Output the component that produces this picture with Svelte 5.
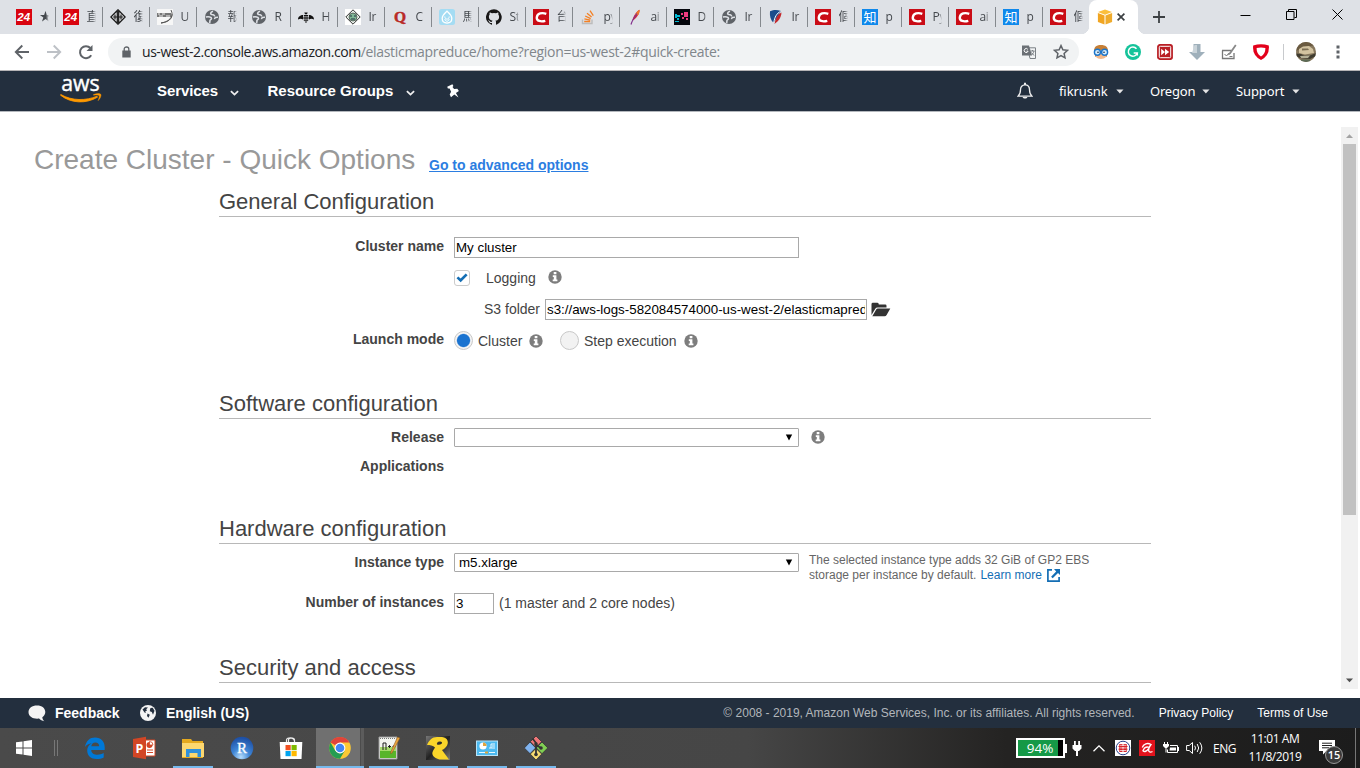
<script>
  const tabs = [
    ['red24', '★'], ['red24', '直'], ['knot', '復'], ['sketch', 'U'], ['globe', '報'], ['globe', 'R'],
    ['bee', 'H'], ['diamond', 'Ir'], ['quora', 'C'], ['ice', '馬'], ['github', 'St'], ['csdn', '台'],
    ['stack', 'py'], ['feather', 'ai'], ['pixels', 'D'], ['globe', 'Ir'], ['shield', 'Ir'], ['csdn', '個'],
    ['zhihu', 'p'], ['csdn', 'Py'], ['csdn', 'ai'], ['zhihu', 'p'], ['csdn', '個']
  ];
  const apps = ['edge', 'ppt', 'folder', 'rstudio', 'store', 'chrome', 'npp', 'putty', 'panel', 'git'];
  const running = ['folder', 'chrome', 'npp', 'putty', 'panel', 'git'];
</script>

{#snippet favicon(kind)}
  <svg class="fav" viewBox="0 0 16 16" width="16" height="16">
    {#if kind === 'red24'}
      <rect width="16" height="16" fill="#d9040f" />
      <text x="7.700" y="12" text-anchor="middle" font-family="Liberation Sans" font-size="11.500" font-weight="700" font-style="italic" fill="#fff">24</text>
    {:else if kind === 'csdn'}
      <rect width="16" height="16" fill="#ca0c16" />
      <path d="M13.3 4.8C9 3.3 4.3 4.2 3.8 8.3 3.4 12.2 8 13 12.3 11.8" fill="none" stroke="#fff" stroke-width="2.4" />
    {:else if kind === 'zhihu'}
      <rect width="16" height="16" fill="#0f88eb" />
      <text x="8" y="12.6" text-anchor="middle" font-family="Noto Sans CJK SC" font-size="13" fill="#fff">知</text>
    {:else if kind === 'globe'}
      <circle cx="8" cy="8" r="7" fill="#5f6368" />
      <path d="M9 2.300C6.300 3.200 6 5 7.800 5.500c1.800.3 3 .7 2.700 2M1.800 8C4.500 7.500 7.600 7.800 7.500 9.500c0 1.300-1.900 1-1.600 2.600.1.900-.1 1.500-.5 2M14 8.300c-2.300-.3-3.600.6-3.400 1.900" fill="none" stroke="#dee1e6" stroke-width="1.600" />
    {:else if kind === 'knot'}
      <path d="M8 .5 15.500 8 8 15.500.5 8z" fill="#fff" fill-opacity=".5" />
      <g fill="none" stroke="#1c1c1c" stroke-width="1.300"><path d="M7.300 1.500.9 8l6.400 6.500zM8.700 1.500 15.100 8l-6.400 6.500z" /><path d="M3 8h10M5 5.500v5M11 5.500v5" stroke-width="1.200" /></g>
    {:else if kind === 'sketch'}
      <rect width="16" height="16" fill="#f7f7f7" />
      <path d="M0 4h14v4H0z" fill="#777" /><path d="M1 5h2M5 5h3M9 7h4M2 7h4" stroke="#eee" />
      <path d="M14 1c3 6 0 12-10 13M15 5c0 5-5 8-11 9" fill="none" stroke="#555" />
    {:else if kind === 'bee'}
      <g fill="#111"><path d="M0 10.500C0 7.500 2.500 6 5 6v4.500C3.500 9.500 2 9.500 0 10.500zM16 10.500C16 7.500 13.500 6 11 6v4.500c1.500-1 3-1 5 0zM6.300 3.500h3.400L9 5.200H7zM5.800 6h4.400v1.400H5.800zM5.400 8.200h5.200v1.500H5.400zM5.800 10.500h4.400v1.300H5.800zM6.600 12.500h2.800L8 13.900z" /></g>
    {:else if kind === 'diamond'}
      <rect width="16" height="16" fill="#fff" /><path d="M8 .8 15.2 8 8 15.2.8 8z" fill="#e8f0e9" stroke="#333" />
      <circle cx="8" cy="8" r="4" fill="#7fb795" stroke="#444" stroke-width=".7" /><path d="M5 7h2M9 7h2M6 10h4" stroke="#234" />
    {:else if kind === 'quora'}
      <text x="8" y="13" text-anchor="middle" font-family="Liberation Serif" font-size="15.500" font-weight="700" fill="#b92b27" stroke="#b92b27" stroke-width=".5">Q</text>
    {:else if kind === 'ice'}
      <rect width="16" height="16" rx="2.5" fill="#a4dcf3" /><path d="M8 2.2c1 1.3 4.8 3.3 4.8 7.4 0 3-2.2 4.5-4.8 4.5s-4.8-1.5-4.8-4.5C3.200 5.500 7 3.500 8 2.200z" fill="none" stroke="#fff" stroke-width="1.300" />
      <path d="M5.800 7.500c.2 3.500 4.200 3.500 4.400 0M5.800 10c.8 3 3.600 3 4.400 0" fill="none" stroke="#fff" />
    {:else if kind === 'github'}
      <path fill="#181717" d="M8 .2a8 8 0 0 0-2.500 15.600c.4.1.5-.2.5-.4v-1.500c-2.200.5-2.700-1-2.700-1-.4-.9-.9-1.200-.9-1.200-.7-.5.100-.5.100-.5.800.1 1.200.8 1.200.8.7 1.200 1.900.9 2.300.7.1-.5.3-.9.5-1.100-1.800-.2-3.600-.9-3.600-4 0-.9.3-1.600.8-2.100-.1-.2-.4-1 .1-2.100 0 0 .7-.2 2.200.8a7.600 7.600 0 0 1 4 0c1.500-1 2.200-.8 2.200-.8.4 1.100.200 1.900.100 2.100.5.600.800 1.300.800 2.200 0 3.100-1.900 3.700-3.700 3.900.3.300.6.800.6 1.500v2.200c0 .2.100.500.500.400A8 8 0 0 0 8 .2z" />
    {:else if kind === 'stack'}
      <path d="M2.500 10.500v4h9.500v-4" fill="none" stroke="#bcbbbb" stroke-width="1.400" />
      <g stroke="#f48024" stroke-width="1.300"><path d="M4.200 12.500h6M4.400 9.900l5.900 1.200M5.200 7l5.500 2.600M7 4.200l4.600 3.800M10 1.600l3.300 5" /></g>
    {:else if kind === 'feather'}
      <path d="M12.500.8C9 2.500 6 8 5.500 11.500c3-1 7.500-6.500 7-10.700z" fill="#d22b3c" /><path d="M12.500.8C11 1.500 9 4 8 6l3.500-.3c1-2 1.200-3.800 1-4.900z" fill="#ef7b28" /><path d="M4 15.500C5 12 7 8.500 10 4.500" stroke="#83308d" fill="none" stroke-width="1.200" />
    {:else if kind === 'pixels'}
      <rect width="16" height="16" fill="#05070d" /><g fill="#00b9d5"><path d="M1 5h2v4H1zM3 6h3v2H3zM3 9h2v2H3zM1 12h4v1H1z" /></g><g fill="#f23b80"><path d="M7 4h2v2H7zM10 3h4v5h-4zM8 8h2v2H8zM12 9h2v2h-2z" /></g>
    {:else if kind === 'shield'}
      <path d="M2 2.200C6 .5 9 .5 13 2L5.500 14C2.500 11 1.500 7 2 2.200z" fill="#1b4d8c" /><path d="M13.500 3.500C10 5 7.500 9 6.500 15c4-3 6.500-6 7-11.500z" fill="#c3272b" /><path d="M12.500 2.500C9 4 6.500 8 5.700 14" fill="none" stroke="#fff" />
    {/if}
  </svg>
{/snippet}

{#snippet info()}
  <svg class="info" viewBox="0 0 14 14" width="14" height="14"><circle cx="7" cy="7" r="6.700" fill="#7d7d7d" /><path d="M5.700 2.100h2.700v2.100H5.700zM4.800 5.200h3.600v4.300h1v1.700H4.700V9.500h1.100V6.900h-1z" fill="#fff" /></svg>
{/snippet}

{#snippet chevron(cls)}
  <svg class={cls} viewBox="0 0 9 6" width="9" height="6"><path d="M.9 1.100 4.500 4.600 8.100 1.100" fill="none" stroke="#eee" stroke-width="1.800" /></svg>
{/snippet}

{#snippet caret()}
  <svg viewBox="0 0 8 5" width="8" height="5"><path d="M.3.500h7.200L3.900 4.500z" fill="#e5e5e5" /></svg>
{/snippet}

{#snippet appicon(kind)}
  <svg viewBox="0 0 24 24" width="24" height="24">
    {#if kind === 'edge'}
      <path fill="#0078d7" d="M2 11C3 4.800 7 1.500 12 1.500c6 0 9.700 4 9.700 9.700V14H8.200c.2 3.600 3.200 4.800 6.300 4.800 2.300 0 4.300-.6 6.200-1.700v4.300c-2 1.100-4.400 1.600-7 1.600-5.800 0-9.500-3.300-9.500-8.500 0-3.300 1.700-5.800 4.600-7.200C5.600 7.800 3.500 9 2 11zm6.300-.7h7.900c0-2.400-1.500-3.800-3.800-3.800-2.400 0-3.700 1.500-4.100 3.800z" />
    {:else if kind === 'ppt'}
      <path d="M13 4h10v16H13z" fill="#fff" stroke="#d24625" /><circle cx="17.500" cy="9" r="3" fill="#d24625" /><path d="M17.500 9V5.500A3.500 3.500 0 0 1 21 9z" fill="#fff" stroke="#d24625" stroke-width=".8" /><path d="M15 14h6M15 16.500h6" stroke="#d24625" /><path d="M1 3 14 .8v22.400L1 21z" fill="#d24625" />
      <text x="7.500" y="16.500" text-anchor="middle" font-family="Open Sans" font-size="12.500" font-weight="700" fill="#fff">P</text>
    {:else if kind === 'folder'}
      <path d="M1 3h9l1.500 2H22v17H1z" fill="#e5a91f" /><path d="M1 7h22v14H1z" fill="#fcd770" /><path d="M5 21v-8h15v8h-3.500v-4h-8v4z" fill="#2f8fdb" />
    {:else if kind === 'rstudio'}
      <defs><radialGradient id="ball" cx=".45" cy=".9" r=".85"><stop offset="0" stop-color="#b5dcfc" /><stop offset=".45" stop-color="#3f86d6" /><stop offset="1" stop-color="#1e50a5" /></radialGradient></defs>
      <circle cx="12" cy="12" r="11.300" fill="url(#ball)" /><text x="12" y="16.800" text-anchor="middle" font-family="Liberation Serif" font-size="15" fill="#fff" stroke="#fff" stroke-width=".3">R</text>
    {:else if kind === 'store'}
      <path d="M7.500 6V4c0-3 8-3 8 0v2M9.500 6V3.500C10.500 1 15 2 15.500 5" fill="none" stroke="#eee" stroke-width="1.200" /><path d="M.7 6h22.600l-.8 17h-21z" fill="#fff" /><path d="M6.500 9h5.200v5.200H6.500z" fill="#f25022" /><path d="M12.500 9h5.200v5.200h-5.200z" fill="#7fba00" /><path d="M6.500 15h5.200v5.200H6.500z" fill="#00a4ef" /><path d="M12.500 15h5.200v5.200h-5.200z" fill="#ffb900" />
    {:else if kind === 'chrome'}
      <circle cx="12" cy="12" r="10.800" fill="#fcc934" /><path d="M12 12 2.600 6.600A10.800 10.800 0 0 1 21.400 6.600H12z" fill="#e0443a" /><path d="M2.600 6.600A10.800 10.800 0 0 0 12 22.800L16.700 14.700 12 17.400 7.300 14.700z" fill="#249d53" /><circle cx="12" cy="12" r="5.400" fill="#fff" /><circle cx="12" cy="12" r="4.300" fill="#4285f4" />
    {:else if kind === 'npp'}
      <path d="M2 1h18v22H2z" fill="#f3f5f0" stroke="#999" /><path d="M3 13h16v9H3z" fill="#58b52a" /><path d="M3 11h16v4H3z" fill="#a5dc6c" /><path d="M3 2.500h16" stroke="#777" stroke-dasharray="1 1" /><path d="M6 14V7h3v7M11 10.500h3M12.500 9v3M15.500 10.500h3M17 9v3" stroke="#222" fill="none" /><path d="M23 2 15 17l-1.500.5.500-2L20.500 1z" fill="#e8a33e" stroke="#81501b" stroke-width=".5" />
    {:else if kind === 'putty'}
      <defs><linearGradient id="dark" x2="1" y2="1"><stop stop-color="#777" /><stop offset=".5" stop-color="#222" /><stop offset="1" stop-color="#777" /></linearGradient></defs>
      <path d="M0 0h24v24H0z" fill="url(#dark)" /><path fill-rule="evenodd" d="M1 9C3 4.500 6 1 11 1h5c6 .5 7.500 6 4 10-1.500 1.700-2.500 2.500-4 3l7 9.500h-9.500C7.500 22 5 18.500 7 15c.7-1.500 1.500-2.500 2-3.500C7 9.500 4 9 1 9zM13.500 5.500c-1.800 0-3 1.500-2.500 3 2.500 1 5.500-.5 5-2-.3-.8-1.200-1-2.500-1z" fill="#f9d52a" />
    {:else if kind === 'panel'}
      <rect x="1.500" y="5" width="21" height="14.500" fill="#4dbaf0" stroke="#b8e4f8" /><circle cx="8" cy="10" r="3.600" fill="#fff" /><path d="M8 10V6.400a3.600 3.600 0 0 1 3.600 3.600z" fill="#e2a33c" /><path d="M14 12h2V8h4M16 12h4M17 10h3" stroke="#e8f8ff" fill="none" /><path d="M4 16.500h6M14 16.500h6" stroke="#e8f8ff" /><path d="M10 16.500h3" stroke="#dda63e" stroke-width="2" />
    {:else}
      <g stroke="#333" stroke-width=".8"><path d="M12 0l5.700 5.700-5.700 5.800-5.700-5.800z" fill="#ee7678" /><path d="M6 6l5.700 5.900L6 17.700.3 12z" fill="#80b3ef" /><path d="M18 6l5.800 5.900L18 17.700l-5.700-5.800z" fill="#80cf54" /><path d="M12 12.400l5.700 5.700L12 24l-5.700-5.900z" fill="#f8dc72" /></g>
      <path d="M8.500 2.500 12 7v12M12 9l5 3" stroke="#333" stroke-width="1.800" fill="none" /><circle cx="12" cy="8" r="1.800" fill="#333" /><circle cx="17" cy="12" r="1.800" fill="#333" /><circle cx="12" cy="18.500" r="1.800" fill="#333" />
    {/if}
  </svg>
{/snippet}

<div class="screen">
  <div class="tabstrip">
    {#each tabs as [kind, label], i}
      <div class="tab" class:last={i === tabs.length - 1}>{@render favicon(kind)}<span>{label}</span></div>
    {/each}
    <div class="tab active">
      <svg viewBox="0 0 16 16" width="16" height="16"><path d="M8 .5 15 3 8 5.800 1 3z" fill="#fbbf3d" /><path d="M.9 4 7.500 6.500v9L.9 13z" fill="#f1a521" /><path d="M15.100 4 8.500 6.500v9L15.100 13z" fill="#efab2c" /></svg>
      <svg viewBox="0 0 8 8" width="8" height="8"><path d="M.6.600l6.800 6.800M7.400.600.600 7.400" stroke="#3c4043" stroke-width="1.700" /></svg>
    </div>
    <svg class="plus" viewBox="0 0 12 12" width="12" height="12"><path d="M6 0v12M0 6h12" stroke="#3c4043" stroke-width="1.800" /></svg>
    <div class="winbtns">
      <svg viewBox="0 0 11 11" width="11" height="11"><path d="M.5 6.500h10" stroke="#000" /></svg>
      <svg viewBox="0 0 11 11" width="11" height="11"><path d="M.5 2.500h7.500v8H.5zM2.500 2V.5h8v8H8.500" fill="none" stroke="#000" /></svg>
      <svg viewBox="0 0 11 11" width="11" height="11"><path d="M.5.500l10 10M10.500.500l-10 10" stroke="#000" /></svg>
    </div>
  </div>

  <div class="toolbar">
    <svg viewBox="0 0 16 16" width="16" height="16"><path d="M15 8H2M8.300 1.500 1.800 8l6.500 6.500" fill="none" stroke="#5f6368" stroke-width="1.900" /></svg>
    <svg viewBox="0 0 16 16" width="16" height="16"><path d="M1 8h13M7.700 1.500 14.200 8l-6.500 6.500" fill="none" stroke="#bdc1c6" stroke-width="1.900" /></svg>
    <svg viewBox="0 0 16 16" width="16" height="16"><path d="M13.200 11.200A6 6 0 1 1 12.400 4" fill="none" stroke="#5f6368" stroke-width="2" /><path d="M14.500 1v6h-6z" fill="#5f6368" /></svg>
    <div class="omnibox">
      <svg class="lock" viewBox="0 0 9 12" width="9" height="12"><path d="M.3 4.500h8.400v7H.3z" fill="#5f6368" /><path d="M2.200 5V3c0-2.700 4.600-2.700 4.600 0v2" fill="none" stroke="#5f6368" stroke-width="1.300" /></svg>
      <span class="url"><b>us-west-2.console.aws.amazon.com</b><i>/elasticmapreduce/home?region=us-west-2#quick-create:</i></span>
      <svg class="translate" viewBox="0 0 14 14" width="14" height="14"><path d="M5.500 2.800h8v10.700H8z" fill="#f1f3f4" stroke="#7b8085" /><path d="M0 .5h7l3 10H0z" fill="#6b7075" /><path d="M5.800 4.300a2 2 0 1 0 .3 1.900H4.500" fill="none" stroke="#fff" /><path d="M8.500 6h4M10.500 5v1M12 6c-.3 2-1.500 3-2.500 4M9.500 7.500l2.500 3" stroke="#7b8085" fill="none" /></svg>
      <svg class="star" viewBox="0 0 16 16" width="16" height="16"><path d="M8 1.600l1.900 4.200 4.600.5-3.400 3.100.9 4.500-4-2.300-4 2.300.9-4.500L1.500 6.300l4.600-.5z" fill="none" stroke="#5f6368" stroke-width="1.500" /></svg>
    </div>
    <div class="exts">
      <svg viewBox="0 0 16 16" width="16" height="16"><path d="M1 7C1 2.500 4 1 8 1c4.500 0 7 2 7 6l-1.500 6h-11z" fill="#c77f35" /><path d="M3 6h10v7c-2 2.500-8 2.500-10 0z" fill="#f2b98b" /><circle cx="4.400" cy="8.300" r="3" fill="#d4ecfb" stroke="#1a75cc" stroke-width="1.400" /><circle cx="11.600" cy="8.300" r="3" fill="#d4ecfb" stroke="#1a75cc" stroke-width="1.400" /><circle cx="5" cy="8.300" r=".8" fill="#124" /><circle cx="11" cy="8.300" r=".8" fill="#124" /></svg>
      <svg viewBox="0 0 16 16" width="16" height="16"><circle cx="8" cy="8" r="8" fill="#15c39a" /><path d="M11.500 4.800A4.600 4.600 0 1 0 12.300 9H8.700M12.300 8.500v3" fill="none" stroke="#fff" stroke-width="1.500" /></svg>
      <svg viewBox="0 0 16 16" width="16" height="16"><rect x=".8" y=".8" width="14.400" height="14.400" rx="2" fill="#b91f25" stroke="#b91f25" stroke-width="1.400" /><rect x="2.300" y="2.300" width="11.400" height="11.400" rx="1" fill="none" stroke="#fff" /><path d="M4.200 4.700 8 8l-3.800 3.300zM8 4.700 12.200 8 8 11.300z" fill="#fff" /></svg>
      <svg viewBox="0 0 16 16" width="16" height="16"><path d="M4.500 0h7v8H16l-8 8-8-8h4.500z" fill="#9fb0bb" /><path d="M5.500 1h2.500v8H3z" fill="#c9d3d9" /></svg>
      <svg viewBox="0 0 16 16" width="16" height="16"><path d="M1 6.500h9.500M13 9v5.500H1.500v-8" fill="none" stroke="#777" stroke-width="1.300" /><path d="M14.800 1 9 9.300l-1.800 1.200" fill="none" stroke="#888" stroke-width="1.800" /><path d="M3.500 10l2 2 2-2.500M8.500 12.500h3" fill="none" stroke="#777" /></svg>
      <svg viewBox="0 0 16 16" width="16" height="16"><path d="M.2 1.500Q8-1 15.800 1.500 17 11.500 8 16-1 11.500.2 1.500z" fill="#e3001b" /><path d="M3.600 4Q8 2.900 12.400 4 12.500 9.800 8 12.400 3.500 9.800 3.600 4z" fill="#fff" /></svg>
    </div>
    <span class="divider"></span>
    <svg class="avatar" viewBox="0 0 20 20" width="20" height="20"><defs><clipPath id="round"><circle cx="10" cy="10" r="10" /></clipPath></defs><g clip-path="url(#round)"><path d="M0 0h20v20H0z" fill="#85765c" /><path d="M0 0h20v3L9 5 0 9z" fill="#6a5a40" /><path d="M3 7 7 4.500l6-.5 4 3 1 4-9 1.500L3 11z" fill="#d3c3a0" /><path d="M6 6.500h6l1 1.500-7 .5z" fill="#7b6e54" /><path d="M0 11.500 5 12l3 1.500h6L20 11v3l-6 3-10-1-4-2z" fill="#3f3b2f" /><path d="M4 14l10-.5-2 2.500H5z" fill="#b3ae95" /><path d="M5 17.500h9v3H5z" fill="#5c6a55" /></g></svg>
    <svg class="dots" viewBox="0 0 4 14" width="4" height="14"><path d="M.5.500h3v3h-3zM.5 5.500h3v3h-3zM.5 10.500h3v3h-3z" fill="#5f6368" /></svg>
  </div>

  <header>
    <svg class="aws" viewBox="0 0 42 26" width="42" height="26">
      <text x="1.200" y="13.200" font-family="Open Sans" font-size="21" textLength="38.500" lengthAdjust="spacingAndGlyphs" fill="#fff" stroke="#fff" stroke-width=".4">aws</text>
      <path d="M.5 17.200C11 25.500 26 26 37.500 19.200l-.5-1C26 22.800 12 23 .8 16.500z" fill="#f90" stroke="#f90" stroke-width=".8" /><path d="M33.500 16.600c3-1.300 6.500-1.300 7.300-.3.700 1.300-.6 4.500-2.700 6.400.8-2.500 1.600-4.400 1-5.200-.8-.8-3-.6-5.600-.3z" fill="#f90" stroke="#f90" stroke-width=".4" />
    </svg>
    <span class="menu services">Services</span>{@render chevron('chev')}
    <span class="menu groups">Resource Groups</span>{@render chevron('chev')}
    <svg class="pin" viewBox="0 0 14 14" width="14" height="14"><path d="M1.200 2.800 6.400.2l1 1.900-.9.800 1.600 2.100 3.200-.2 1.600 2.200-3 1.900 2.600 4.500-4.200-3L5 13.200 3.700 10.500l1.400-2.800L3.600 4.600l-1.700-.1z" fill="#fff" /></svg>
    <div class="account">
      <svg class="bell" viewBox="0 0 16 18" width="16" height="18"><path d="M1 14.200c2-1.700 2.500-3.700 2.500-6.400 0-3 1.700-4.900 4.500-4.900s4.500 1.900 4.500 4.900c0 2.700.5 4.700 2.500 6.400z" fill="none" stroke="#eee" stroke-width="1.300" /><path d="M7 .800h2V3H7zM5.600 14.900h4.800C10 17 6 17 5.600 14.900z" fill="#eee" /></svg>
      <span class="user">fikrusnk</span>{@render caret()}
      <span class="region">Oregon</span>{@render caret()}
      <span class="support">Support</span>{@render caret()}
    </div>
  </header>

  <div class="content">
    <main>
      <div class="title"><h1>Create Cluster - Quick Options</h1><a href="#advanced">Go to advanced options</a></div>
      <section>
        <h2>General Configuration</h2>
        <div class="row name"><label for="cname">Cluster name</label><input id="cname" class="wide" value="My cluster" /></div>
        <div class="row logging"><span class="label"></span><span class="check"><svg viewBox="0 0 12 10" width="12" height="10"><path d="M.5 5.200 2.300 3.400 4.600 5.600 9.700.5 11.600 2.200 4.700 9.300z" fill="#146eb4" /></svg></span><span class="t-log">Logging</span>{@render info()}</div>
        <div class="row s3"><span class="t-s3">S3 folder</span><input class="s3in" value="s3://aws-logs-582084574000-us-west-2/elasticmapreduce/" />
          <svg class="open" viewBox="0 0 20 15" width="20" height="15"><path d="M.5 13V2.200Q.5.800 1.900.800h4.600Q7.800.800 7.800 2.500h6.500q1.200 0 1.200 1.200v1.700H6.700Q5 5.400 4.300 6.800z" fill="#333" /><path d="M1.300 14.200 5.200 7.500q.5-.9 1.600-.9h12.500L15.600 13q-.7 1.200-2 1.200z" fill="#333" /></svg></div>
        <div class="row mode"><span class="label">Launch mode</span><span class="radio on"></span><span class="t-cluster">Cluster</span>{@render info()}<span class="radio second"></span><span class="t-step">Step execution</span>{@render info()}</div>
      </section>
      <section class="software">
        <h2>Software configuration</h2>
        <div class="row release"><span class="label">Release</span><span class="select"><span></span><svg viewBox="0 0 8 7" width="8" height="7"><path d="M.8.500h6.400L4 6.500z" /></svg></span>{@render info()}</div>
        <div class="row appsrow"><span class="label">Applications</span></div>
      </section>
      <section class="hardware">
        <h2>Hardware configuration</h2>
        <div class="row instance"><span class="label">Instance type</span><span class="select"><span>m5.xlarge</span><svg viewBox="0 0 8 7" width="8" height="7"><path d="M.8.500h6.400L4 6.500z" /></svg></span>
          <p><span>The selected instance type adds 32 GiB of GP2 EBS</span><span>storage per instance by default. <a href="#learn">Learn more</a><svg viewBox="0 0 13 13" width="13" height="13"><path d="M5 .9H.9v11.200h11.200V8" fill="none" stroke="#146eb4" stroke-width="1.700" /><path d="M7 0h6v6l-2-2-5.300 5.300-1.600-1.500L9.200 2.400z" fill="#146eb4" /></svg></span></p></div>
        <div class="row count"><span class="label">Number of instances</span><input class="num" value="3" /><span class="t-nodes">(1 master and 2 core nodes)</span></div>
      </section>
      <section class="security"><h2>Security and access</h2></section>
    </main>
    <div class="scroll">
      <svg viewBox="0 0 17 17" width="17" height="17"><path d="M5 11h7L8.500 7.200z" fill="#a3a3a3" /></svg>
      <div class="thumb"></div>
      <svg viewBox="0 0 17 17" width="17" height="17"><path d="M5 6.500h7L8.500 10.300z" fill="#505050" /></svg>
    </div>
  </div>

  <footer>
    <svg viewBox="0 0 18 17" width="18" height="17"><path d="M9 .5c5 0 8.300 2.700 8.300 6.500 0 2.300-1.300 4-3 5.200.2 1.600.9 2.900 2 4-2.200-.2-3.900-1-5.200-2.600C5 14.300.5 11.500.5 7 .5 3.200 4 .5 9 .5z" fill="#f4f4f4" /></svg>
    <span class="feedback">Feedback</span>
    <svg class="world" viewBox="0 0 16 16" width="16" height="16"><circle cx="8" cy="8" r="8" fill="#f4f4f4" /><path d="M2.500 4.500 5 2.200l3 .3-1.800 1.800.8 1.200-1.800 1 .8 1.500-1.500-.5zM7.500 8.500 9.800 9.800 8.500 12.800 7 11zM10.500 3l2.200-.3 1.800 3-1.500 4-1.200-2.800-2-.6.200-1.800z" fill="#232f3e" /></svg>
    <span class="lang">English (US)</span>
    <span class="copy">© 2008 - 2019, Amazon Web Services, Inc. or its affiliates. All rights reserved.</span>
    <span class="privacy">Privacy Policy</span>
    <span class="terms">Terms of Use</span>
  </footer>

  <div class="taskbar">
    <svg class="start" viewBox="0 0 16 16" width="16" height="16"><path d="M0 2.300 6.500 1.400v6.100H0zM7.500 1.200 16 0v7.500H7.500zM0 8.500h6.500v6.100L0 13.700zM7.500 8.500H16V16l-8.500-1.200z" fill="#fff" /></svg>
    <span class="grip"></span>
    <div class="apps">
      {#each apps as a}
        <div class="app" class:running={running.includes(a)} class:focused={a === 'chrome'}>{@render appicon(a)}</div>
      {/each}
    </div>
    <div class="tray">
      <div class="battery"><span>94%</span></div>
      <svg class="plug" viewBox="0 0 10 15" width="10" height="15"><path d="M2 0h1.800v4H2zM6.200 0H8v4H6.200zM.5 4h9v3.500L7 10H6v5H4v-5H3L.5 7.500z" fill="#fff" /></svg>
      <svg class="up" viewBox="0 0 12 7" width="12" height="7"><path d="M.5 6.300 6 .9l5.500 5.400" fill="none" stroke="#fff" stroke-width="1.300" /></svg>
      <svg class="seal" viewBox="0 0 16 16" width="16" height="16"><path d="M0 0h16v16H0z" fill="#fff" /><circle cx="8" cy="8" r="6.800" fill="#fff" stroke="#28408b" /><path d="M4.300 4h3.200v8H4.300zM8.500 4h3.200v8H8.500z" fill="#d8242a" /><path d="M3.500 6.500h9M3.500 9.200h9" stroke="#d8242a" /><path d="M5 5.300h6M5 7.900h6M5 10.500h6" stroke="#fff" stroke-width=".7" /></svg>
      <svg class="avira" viewBox="0 0 16 16" width="16" height="16"><path d="M0 0h16v16H0z" fill="#e2131c" /><path d="M3.300 7.500C4.500 3.800 8.500 2.500 12 4.500 10.300 6.800 9.200 9.200 9.800 11c.6 1.500 2.200 1.300 3.700.5M10 7.300C7.500 6.600 5 8 4 10.800c1.700 1.500 3.700.4 5.300-2" fill="none" stroke="#fff" stroke-width="1.400" /></svg>
      <svg class="charge" viewBox="0 0 16 12" width="16" height="12"><path d="M7 3.500h7.500v7h-10V7.500" fill="none" stroke="#fff" /><path d="M7 5.500h6v3H6.500zM15 5h1v4h-1zM1 0h1v2H1zM4 0h1v2H4zM0 2h6v2L4 6H3.500v4.500h-1V6H2L0 4z" fill="#fff" /></svg>
      <svg class="vol" viewBox="0 0 17 14" width="17" height="14"><path d="M.6 4.500h2.600L6.500 1.500v11L3.200 9.500H.6z" fill="none" stroke="#fff" /><path d="M8.700 4.700q1.600 2.300 0 4.600M11.200 3q3 4 0 8M13.700 1.300q4.300 5.700 0 11.400" fill="none" stroke="#fff" /></svg>
      <span class="eng">ENG</span>
      <div class="clock"><span>11:01 AM</span><span>11/8/2019</span></div>
      <div class="action">
        <svg viewBox="0 0 16 15" width="16" height="15"><path d="M0 0h16v11H7.500L4 14.500V11H0z" fill="#fff" /><path d="M3 3.200h10M3 5.500h10M3 7.800h7" stroke="#1d1d1d" /></svg>
        <span class="badge">15</span>
      </div>
    </div>
    <span class="peek"></span>
  </div>
</div>

<style>
  :global(body) { background: #fff; overflow: hidden; }
  * { box-sizing: border-box; }
  svg { display: block; flex: none; }
  .screen { width: 1360px; height: 768px; display: flex; flex-direction: column; font-family: "Liberation Sans", Arial, sans-serif; color: #444; overflow: hidden; white-space: nowrap; }

  .tabstrip { height: 34px; background: #dee1e6; display: flex; padding-left: 9px; flex: none; }
  .tab { width: 47px; height: 20px; margin-top: 7px; border-right: 1px solid #85898e; padding-left: 7px; display: flex; align-items: center; gap: 7.500px; flex: none; }
  .tab.last { border-right-color: transparent; width: 46px; }
  .tab span { width: 9px; overflow: hidden; font: 12px/18px "Open Sans", "Noto Sans CJK TC", sans-serif; letter-spacing: -0.300px; color: #45494e; -webkit-mask: linear-gradient(90deg, #000 65%, transparent); mask: linear-gradient(90deg, #000 65%, transparent); }
  .tab.active { width: 49px; height: 34px; margin-top: 0; background: #fff; border: 0; border-radius: 8px 8px 0 0; padding-left: 8px; gap: 4px; position: relative; }
  .tab.active::before, .tab.active::after { content: ""; position: absolute; bottom: 0; width: 8px; height: 8px; }
  .tab.active::before { left: -8px; background: radial-gradient(circle at 0 0, transparent 8px, #fff 8.500px); }
  .tab.active::after { right: -8px; background: radial-gradient(circle at 100% 0, transparent 8px, #fff 8.500px); }
  .plus { margin: 11px 0 0 15px; }
  .winbtns { display: flex; gap: 35px; margin: 9px 17px 0 auto; }

  .toolbar { height: 37px; background: #fff; border-bottom: 1px solid #b6b4b6; display: flex; align-items: center; padding: 0 17px 0 14px; flex: none; }
  .toolbar > svg + svg { margin-left: 16px; }
  .omnibox { width: 971px; height: 28px; border-radius: 14px; background: #f1f3f4; margin-left: 14px; display: flex; align-items: center; padding: 0 10px 0 14px; flex: none; }
  .url { margin-left: 11px; font: 14px/20px "Open Sans", sans-serif; }
  .url b { font-weight: 400; color: #202124; letter-spacing: -0.45px; }
  .url i { font-style: normal; color: #80868b; letter-spacing: -0.3px; }
  .translate { margin-left: auto; }
  .star { margin-left: 17px; }
  .exts { display: flex; gap: 16px; margin-left: 14px; }
  .divider { width: 1px; height: 16px; background: #c8cacd; margin-left: 14px; }
  .avatar { margin-left: 12px; }
  .toolbar > .dots { margin-left: 20px; }

  header { height: 41px; background: #232f3e; border-bottom: 1px solid #b4b8bd; display: flex; align-items: center; padding: 0 60px; flex: none; color: #fff; }
  .menu { font: 700 15px/20px "Liberation Sans", sans-serif; }
  .services { margin-left: 55px; width: 73px; letter-spacing: -0.100px; }
  .groups { margin-left: 28.500px; width: 138.500px; }
  header :global(.chev) { margin-top: 3px; }
  .pin { margin-left: 31px; }
  .account { display: flex; align-items: center; margin-left: auto; font: 13px/20px "Noto Sans", sans-serif; }
  .user { margin-left: 26px; width: 57px; letter-spacing: -0.100px; }
  .region { margin-left: 26px; width: 52px; letter-spacing: -0.200px; }
  .support { margin-left: 26px; width: 56px; letter-spacing: -0.100px; }

  .content { height: 586px; display: flex; flex: none; overflow: hidden; }
  main { width: 1341px; height: 586px; overflow: hidden; font-size: 14px; line-height: 20px; }
  .title { display: flex; align-items: baseline; padding: 30px 0 0 34px; height: 72px; }
  h1 { margin: 0; font: 400 28px/36px "Liberation Sans", sans-serif; color: #999; width: 395px; }
  .title a { color: #2b7de1; font-weight: 700; position: relative; top: 1px; }
  section { width: 932px; margin-left: 219px; }
  h2 { margin: 0; height: 33px; border-bottom: 1px solid #b8b8b8; font: 400 22px/35px "Liberation Sans", sans-serif; color: #444; }
  .software { margin-top: 35px; }
  .hardware { margin-top: 34px; }
  .security { margin-top: 36px; }
  .row { display: flex; align-items: center; }
  .row label, .label { width: 225px; text-align: right; font-weight: 700; margin-right: 10px; flex: none; position: relative; top: -1px; }
  .name { margin-top: 20px; height: 21px; }
  .row.name label { top: -2px; }
  input { height: 21px; border: 1px solid #a9a9a9; padding: 0 1px; margin: 0; font: 13.333px "Liberation Sans", sans-serif; color: #000; background: #fff; border-radius: 0; outline: 0; }
  .wide { width: 345px; }
  .logging { margin-top: 10px; height: 20px; }
  .logging :global(.info) { margin-bottom: 2px; }
  .check { width: 16px; height: 16px; border: 1px solid #ccc; border-radius: 3px; display: flex; align-items: center; justify-content: center; }
  .t-log { width: 62px; margin-left: 16px; }
  .s3 { margin-top: 11px; height: 21px; padding-left: 265px; }
  .t-s3 { width: 61px; margin-bottom: 2px; }
  .s3in { width: 322px; }
  .open { margin: 0 0 1px 4px; }
  .mode { margin-top: 11px; height: 20px; }
  .mode .label { top: -2px; }
  .radio { width: 19px; height: 19px; border-radius: 50%; border: 1px solid #c8c8c8; background: #f2f2f2; flex: none; margin-bottom: 1px; }
  .radio.on { background: radial-gradient(circle, #1a73d0 6px, #f4f4f4 7.200px); }
  .radio.second { margin-left: 17px; }
  .t-cluster { margin-left: 5px; width: 51px; }
  .t-step { margin-left: 5px; width: 100px; }
  .release { margin-top: 9px; height: 19px; }
  .select { width: 345px; height: 19px; border: 1px solid #a9a9a9; border-radius: 1px; display: flex; align-items: center; justify-content: space-between; padding: 0 5px 0 4px; font-size: 13.333px; color: #000; flex: none; }
  .release :global(.info) { margin: 0 0 1px 12px; }
  .appsrow { margin-top: 10px; height: 20px; }
  .instance { margin-top: 9px; height: 19px; }
  .instance p { margin: 10px 0 0 10px; font-size: 12px; line-height: 15px; color: #666; }
  p span { display: flex; }
  p a { color: #146eb4; text-decoration: none; margin-left: 4px; }
  p svg { margin: 1px 0 0 5px; }
  .count { margin-top: 21px; height: 21px; }
  .count .label { top: -2px; }
  .num { width: 40px; }
  .t-nodes { margin: 0 0 1px 5px; }

  .scroll { width: 17px; height: 562px; margin-top: 15px; background: #f1f1f1; display: flex; flex-direction: column; align-items: center; }
  .thumb { width: 13px; height: 371px; background: #c1c1c1; margin-bottom: auto; }

  footer { height: 30px; background: #232f3e; display: flex; align-items: center; padding: 0 32px 0 28px; flex: none; color: #fff; font-size: 12px; }
  .feedback { font-weight: 700; font-size: 14px; margin-left: 9px; width: 85px; }
  .lang { font-weight: 700; font-size: 14px; margin-left: 10px; }
  .copy { margin-left: auto; color: #b2b6bb; }
  .privacy { margin-left: 24px; }
  .terms { margin-left: 24px; }

  .taskbar { height: 40px; display: flex; align-items: center; background: linear-gradient(90deg, #4a4a4a 0, #464646 55%, #242322 74%, #1c1c1c 100%); padding-left: 16px; flex: none; font-family: "Open Sans", sans-serif; color: #fff; }
  .grip { width: 4px; height: 16px; border: solid #777; border-width: 0 1px; margin-left: 22px; }
  .apps { display: flex; margin-left: 15px; gap: 5px; height: 40px; }
  .app { width: 44px; height: 40px; display: flex; align-items: center; justify-content: center; }
  .app.running { width: 40px; margin: 0 2px; border-bottom: 2px solid #76b9ed; padding-top: 2px; }
  .app.focused { width: 48px; margin: 0 -2px; background: linear-gradient(90deg, #707070 44px, #4c4c4c 44px 45px, #5c5c5c 45px); }
  .tray { display: flex; align-items: center; margin-left: auto; height: 40px; }
  .battery { width: 49px; height: 20px; border: 2px solid #fff; background: linear-gradient(90deg, #159947 0 40px, #000 40px); position: relative; font-size: 13.500px; line-height: 16px; text-align: center; padding-right: 1px; }
  .battery::after { content: ""; position: absolute; right: -4px; top: 4px; width: 2px; height: 9px; background: #fff; }
  .plug { margin-left: 7px; margin-right: 1px; }
  .up { margin-left: 10px; }
  .seal { margin-left: 10px; }
  .avira { margin-left: 8px; }
  .charge { margin-left: 8px; }
  .vol { margin-left: 7px; }
  .eng { margin-left: 10px; width: 35px; font-size: 12px; letter-spacing: -0.500px; }
  .clock { width: 54px; display: flex; flex-direction: column; align-items: center; font-size: 12px; line-height: 18px; letter-spacing: -0.450px; }
  .action { position: relative; width: 26px; height: 30px; margin-left: 17px; padding-top: 7px; }
  .badge { position: absolute; left: 6px; top: 13px; width: 18px; height: 18px; border: 1px solid #999; border-radius: 50%; background: #3a3a3a; font-size: 11px; line-height: 15px; font-weight: 600; text-align: center; }
  .peek { width: 5px; height: 40px; border-left: 1px solid #777; margin-left: 10px; }
</style>
